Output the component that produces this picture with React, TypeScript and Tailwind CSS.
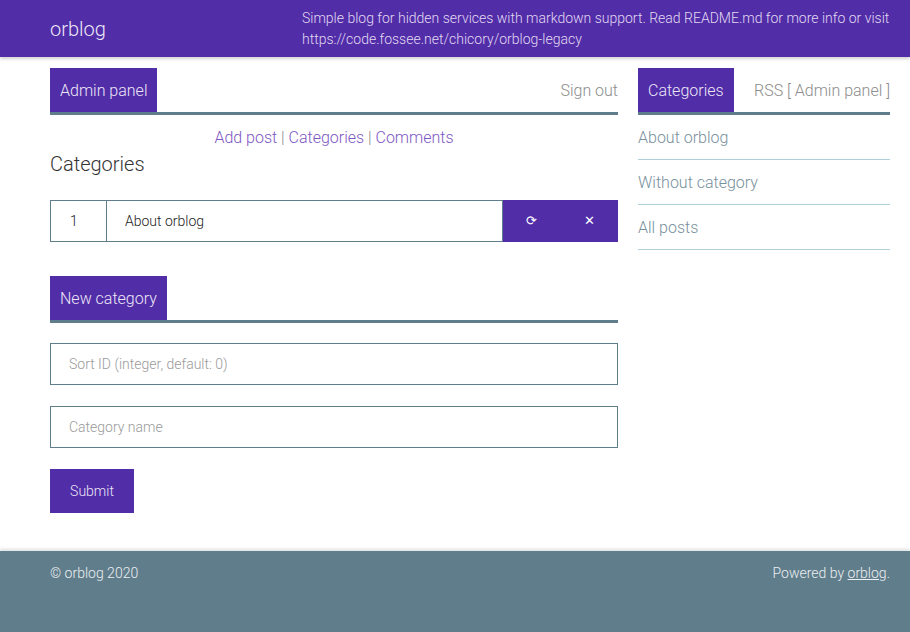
import React from 'react';

const SIDEBAR = ['About orblog', 'Without category', 'All posts'];

function Tab({ children }: { children: React.ReactNode }) {
  return <span className="bg-[#512da8] px-[10px] pt-[11px] pb-[9px] text-[16px] leading-6 text-[#ede7f6]">{children}</span>;
}

export default function App() {
  return (
    <div className="flex min-h-screen flex-col bg-white font-['Roboto',sans-serif] font-light text-[#333]">
      <header className="relative z-10 h-[57px] bg-[#512da8] shadow-[0_2px_3px_rgba(0,0,0,0.18)]">
        <div className="ml-[50px] flex h-full w-[840px] items-center">
          <span className="w-[252px] shrink-0 text-[20px] text-[#ede7f6]">orblog</span>
          <p className="flex-1 text-[14px] leading-[21px] text-[#e1d9f2]">
            Simple blog for hidden services with markdown support. Read README.md for more info or visit
            https://code.fossee.net/chicory/orblog-legacy
          </p>
        </div>
      </header>

      <main className="ml-[50px] flex w-[840px] gap-5 pt-[11px]">
        <div className="w-[568px] shrink-0">
          <div className="flex items-end justify-between border-b-[3px] border-[#607d8b]">
            <Tab>Admin panel</Tab>
            <span className="pb-[9px] text-[16px] leading-6 text-[#8d8d8d]">Sign out</span>
          </div>

          <div className="mt-[11px] text-center text-[16px] leading-6 text-[#888]">
            <a className="text-[#7e57c2]">Add post</a> | <a className="text-[#7e57c2]">Categories</a> |{' '}
            <a className="text-[#7e57c2]">Comments</a>
          </div>
          <h2 className="text-[20px] leading-7 text-[#333]">Categories</h2>

          <div className="mt-[22px] flex h-[42px] text-[14px] text-[#222]">
            <div className="flex w-[57px] items-center border border-[#607d8b] pl-[19px]">1</div>
            <div className="flex flex-1 items-center border-y border-r border-[#607d8b] pl-[18px]">About orblog</div>
            <div className="flex w-[115px] bg-[#512da8] text-[13px] text-white">
              <span className="flex flex-1 items-center justify-center">⟳</span>
              <span className="flex flex-1 items-center justify-center">✕</span>
            </div>
          </div>

          <div className="mt-[34px] flex border-b-[3px] border-[#607d8b]">
            <Tab>New category</Tab>
          </div>

          <div className="mt-[20px] flex h-[42px] items-center border border-[#607d8b] pl-[18px] text-[14px] text-[#9a9a9a]">
            Sort ID (integer, default: 0)
          </div>
          <div className="mt-[21px] flex h-[42px] items-center border border-[#607d8b] pl-[18px] text-[14px] text-[#9a9a9a]">
            Category name
          </div>
          <button className="mt-[21px] h-[44px] w-[84px] bg-[#512da8] text-[14px] font-light text-[#ede7f6]">Submit</button>
        </div>

        <aside className="w-[252px] shrink-0">
          <div className="flex items-end justify-between border-b-[3px] border-[#607d8b]">
            <Tab>Categories</Tab>
            <span className="pb-[9px] text-[16px] leading-6 text-[#8d8d8d]">RSS [ Admin panel ]</span>
          </div>
          {SIDEBAR.map((s) => (
            <div key={s} className="flex h-[45px] items-center border-b border-[#b0cfd9] pt-[1px] text-[16px] text-[#78909c]">
              {s}
            </div>
          ))}
        </aside>
      </main>

      <footer className="mt-[38px] flex-1 bg-[#607d8b] shadow-[0_-2px_3px_rgba(0,0,0,0.12)]">
        <div className="ml-[50px] flex w-[840px] justify-between pt-[12px] text-[14px] leading-5 text-[#eceff1]">
          <span>© orblog 2020</span>
          <span>
            Powered by <a className="underline">orblog</a>.
          </span>
        </div>
      </footer>
    </div>
  );
}
